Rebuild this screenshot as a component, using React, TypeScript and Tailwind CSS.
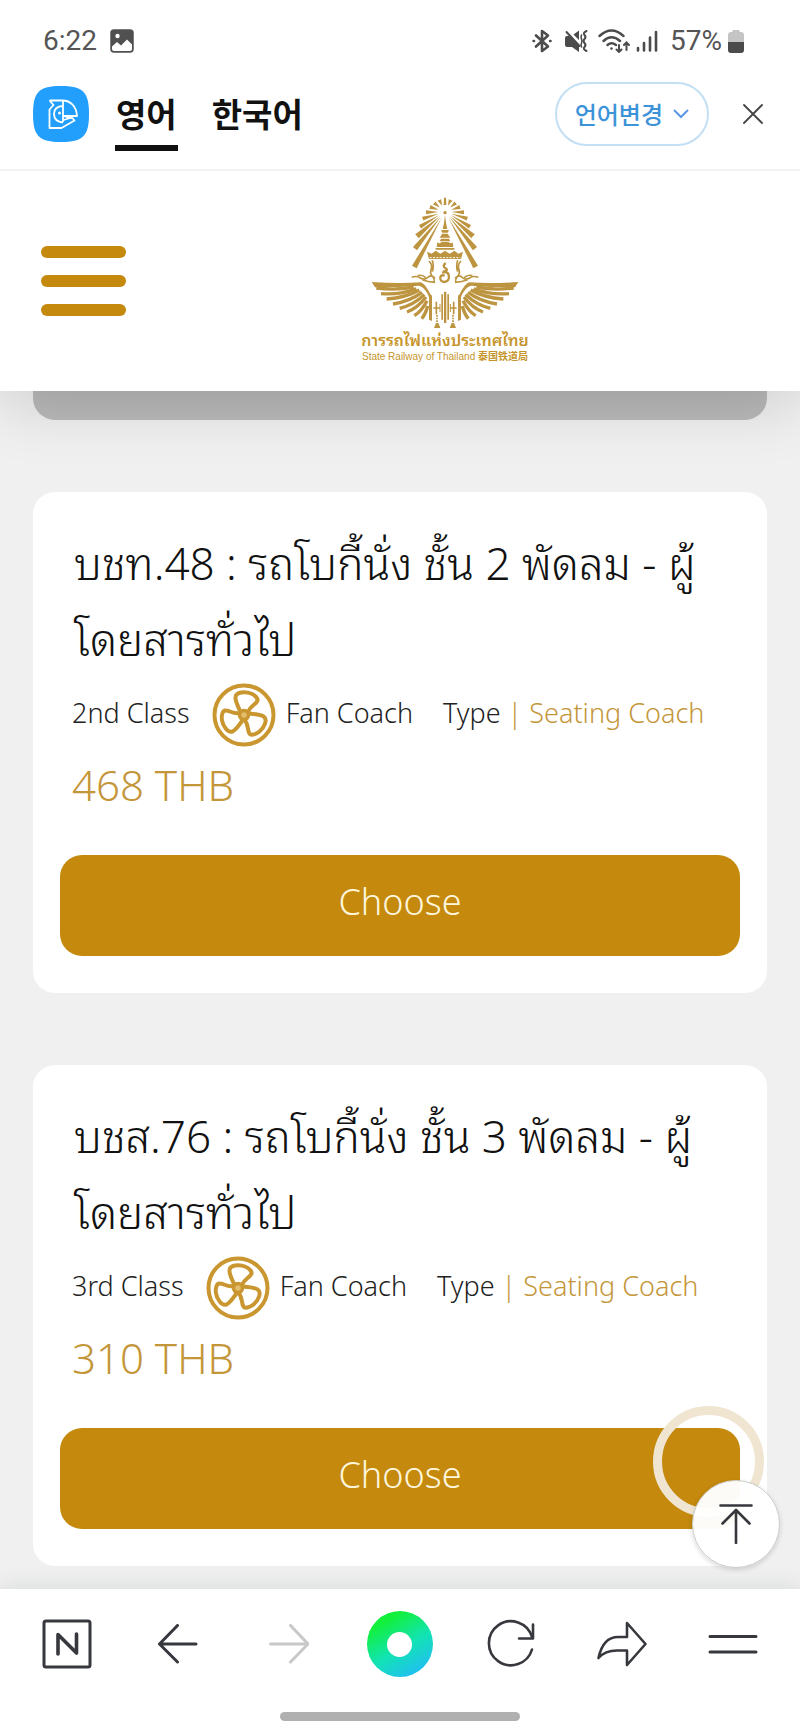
import React from 'react';

interface Fare {
  code: string;
  title: string;
  travelClass: string;
  price: string;
}

const fares: Fare[] = [
  { code: '48', title: 'บชท.48 : รถโบกี้นั่ง ชั้น 2 พัดลม - ผู้โดยสารทั่วไป', travelClass: '2nd Class', price: '468 THB' },
  { code: '76', title: 'บชส.76 : รถโบกี้นั่ง ชั้น 3 พัดลม - ผู้โดยสารทั่วไป', travelClass: '3rd Class', price: '310 THB' },
];

const StatusBar: React.FC = () => (
  <div className="flex h-[82px] items-center justify-between pl-[43px] pr-[56px] font-['Roboto',sans-serif] text-[28px] leading-8 text-[#555]">
    <div className="flex items-center gap-[13px]">
      <span>6:22</span>
      <svg className="h-6 w-6" viewBox="0 0 24 24">
        <rect x="1" y="1" width="22" height="22" rx="3" fill="#505050" stroke="#505050" strokeWidth="1.5" />
        <circle cx="7.5" cy="7" r="2.2" fill="#fff" />
        <path d="M2 17.5 7 13l4 3.5 6-6 5 5V20q0 2-2 2H4q-2 0-2-2z" fill="#fff" />
      </svg>
    </div>
    <div className="flex items-center">
      <svg className="mr-3 h-6 w-5" viewBox="0 0 20 24" fill="none" stroke="#4b4b4b" strokeWidth="2.6" strokeLinecap="round" strokeLinejoin="round">
        <path d="M4 6.5 16 17.5 10 22V2l6 4.5L4 17.5" />
        <path d="M1.5 12h.6M18 12h.6" strokeWidth="2.4" />
      </svg>
      <svg className="mr-2.5 h-6 w-6" viewBox="0 0 24 24">
        <path d="M1 9q0-2 2-2h3l9 9v7l-7-5H3q-2 0-2-2zM9.5 5.5 15 1.5V11z" fill="#4b4b4b" />
        <path d="M2.5 3l13 14" stroke="#4b4b4b" strokeWidth="2" strokeLinecap="round" />
        <path d="M22.5 2q-4 2-2 4t0 4 0 4 0 4 2 4" fill="none" stroke="#4b4b4b" strokeWidth="2" strokeLinecap="round" />
        <path d="M17.5 6q-1 2 0 4t0 4 0 4" fill="none" stroke="#4b4b4b" strokeWidth="1.6" strokeLinecap="round" />
      </svg>
      <svg className="mr-1.5 h-6 w-8" viewBox="0 0 32 24" fill="none" stroke="#4b4b4b" strokeWidth="2.4" strokeLinecap="round">
        <path d="M1.5 7q12-11 24 0M5.5 12q8-7.5 16.5 0M9.5 16q4-3.5 8.5 0" />
        <circle cx="13.5" cy="19.5" r="1.3" fill="#4b4b4b" stroke="none" />
        <path d="M21 16v7m-2.5-2.5L21 23l2.5-2.5M28.5 21v-7.5M26 16l2.5-2.5L31 16" strokeWidth="2" />
      </svg>
      <svg className="mr-3 h-6 w-[22px]" viewBox="0 0 22 24" fill="none" stroke="#4b4b4b" strokeWidth="2.6" strokeLinecap="round">
        <path d="M2 19v2.5M8 14v7.5M14 8.5v13M20 3v18.5" />
      </svg>
      <span className="mr-1.5">57%</span>
      <svg className="h-6 w-4" viewBox="0 0 16 24">
        <path d="M5 1h6l1 2h1q3 0 3 3v8H0V6q0-3 3-3h1z" fill="#c4c4c4" />
        <path d="M0 13h16v8q0 3-3 3H3q-3 0-3-3z" fill="#4b4b4b" />
      </svg>
    </div>
  </div>
);

const PapagoIcon: React.FC = () => (
  <svg className="h-14 w-14 shrink-0" viewBox="0 0 56 56">
    <path d="M28 0C50 0 56 6 56 28S50 56 28 56 0 50 0 28 6 0 28 0z" fill="#229ffd" />
    <g fill="none" stroke="#fff" strokeWidth="1.8" strokeLinejoin="round">
      <path d="M16.5 14.5h13c8 0 14 6 14.5 15.5H30.5M16.5 14.5l4 4.5-4 4.5v18.5h12l13-7.5-2.5-3-8.5 2.5" />
      <path d="M30 14.5v21.5M30 20q-9 .5-9 8t9 8.5M30.5 30l8 2.5" />
    </g>
    <circle cx="26.5" cy="27" r="1.5" fill="#fff" />
  </svg>
);

const TranslateBar: React.FC = () => (
  <div className="relative z-20 flex h-[89px] justify-between border-b-2 border-[#f3f3f3] bg-white px-[33px] font-['Noto_Sans_CJK_KR',sans-serif]">
    <div className="flex items-start gap-[26px] pt-1">
      <PapagoIcon />
      <div className="flex gap-[34px] text-[33px] font-bold leading-[54px] text-[#111]">
        <button className="flex h-[65px] border-b-6 border-[#111] px-px">영어</button>
        <button className="flex h-[65px]">한국어</button>
      </div>
    </div>
    <div className="flex h-16 items-center gap-[30px]">
      <button className="flex h-16 items-center gap-2.5 rounded-full border-2 border-[#c3dff4] px-[18px] text-2xl font-medium text-[#3c93d8]">
        언어변경
        <svg className="h-3 w-4" viewBox="0 0 16 12" fill="none" stroke="#5c97e6" strokeWidth="2">
          <path d="M1 2l7 7 7-7" />
        </svg>
      </button>
      <button aria-label="Close" className="p-1">
        <svg className="h-5 w-5" viewBox="0 0 20 20" fill="none" stroke="#444" strokeWidth="1.8" strokeLinecap="round">
          <path d="M1 1l18 18M19 1 1 19" />
        </svg>
      </button>
    </div>
  </div>
);

// outer end of each ray on the left half, mirrored for the right half
const rays = [
  [222, 258], [224, 203], [230, 166], [239, 137], [247, 113], [257, 94], [269, 78], [282, 66], [297, 57],
];

const RayHalf: React.FC = () => (
  <g>
    {rays.map(([x, y]) => {
      const dx = x - 314;
      const dy = y - 92;
      const len = Math.hypot(dx, dy);
      const w = len > 110 ? 8 : 6;
      const nx = (-dy / len) * w;
      const ny = (dx / len) * w;
      const sx = 314 + (dx / len) * 20;
      const sy = 92 + (dy / len) * 20;
      return <path key={x} d={`M${sx} ${sy}L${x + nx} ${y + ny}L${x - nx} ${y - ny}z`} />;
    })}
  </g>
);

const WingHalf: React.FC = () => (
  <g>
    <path d="M94 303q80 6 148 1 14 6 28 36l5 4v76l-9-4v-68q-12-30-30-34-70 6-132 5z" />
    <g fill="none" stroke="currentColor" strokeWidth="10">
      <path d="M108 321q60 8 112-3" />
      <path d="M122 338q60 4 106-15" />
      <path d="M139 354q58-4 98-27" />
      <path d="M158 369q50-8 87-35" />
      <path d="M178 382q42-10 74-41" />
      <path d="M200 393q32-12 57-45" />
      <path d="M222 404q22-14 38-45" />
      <path d="M244 413q12-14 18-38" />
    </g>
    <path d="M288 362v38M279 381h20" fill="none" stroke="currentColor" strokeWidth="5" />
    <path d="M290 402v26" fill="none" stroke="currentColor" strokeWidth="5" strokeDasharray="5 3" />
    <path d="M287 426h7l6 15h-19z" />
    <path d="M214 289q16-6 26 2 14 8 24-3 10-8 20 4M232 284q14-4 24 6M246 296q16 6 38 8M266 240q12 12 6 26-4 12 6 22 6 8 4 16M276 238q6 20 0 34" fill="none" stroke="currentColor" strokeWidth="5" />
  </g>
);

const RailwayLogo: React.FC = () => (
  <a href="#home" className="flex flex-col items-center text-[#c6952c]">
    <svg className="h-[134px] w-[150px] text-[#bd9440]" viewBox="89 48 450 402" fill="currentColor">
      <RayHalf />
      <path d="M311 50h6l1 22h-8z" />
      <g transform="translate(628 0) scale(-1 1)"><RayHalf /></g>
      <circle cx="314" cy="95" r="5" />
      <path d="M314 102l3 24 4 18h-14l4-18z" />
      <path d="M302 147h24l-4 8h-16zM306 158h16l8 12h-32zM302 173h24l4 8h-32z" />
      <path d="M291 184q8 6 12-1h22q4 7 12 1l2 14h-50zM286 201h56v5h-56z" />
      <path d="M260 212l14 6 12-9 14 9 14-9 14 9 14-9 12 9 14-6-6 22H266z" />
      <path d="M268 230h92" stroke="#fff" strokeWidth="3" strokeDasharray="6 4" />
      <path d="M316 246q-12 10 0 16 10 6-8 10M305 275q16-5 20 6 4 20-13 22-14-2-12-15 4-8 13-4" fill="none" stroke="currentColor" strokeWidth="7" />
      <path d="M311 332h7v94h-7zM303 340h5v76h-5zM321 340h5v76h-5z" />
      <path d="M299 369v24M330 369v24" stroke="currentColor" strokeWidth="3" />
      <WingHalf />
      <g transform="translate(628 0) scale(-1 1)"><WingHalf /></g>
    </svg>
    <span className="whitespace-nowrap font-['Noto_Sans','Noto_Sans_Thai_Looped','Loma','Noto_Sans_Thai',sans-serif] text-base font-semibold leading-[18px]">การรถไฟแห่งประเทศไทย</span>
    <span className="whitespace-nowrap font-['Liberation_Sans','Noto_Sans_CJK_SC',sans-serif] text-[10px] leading-4">State Railway of Thailand <b>泰国铁道局</b></span>
  </a>
);

const SiteHeader: React.FC = () => (
  <header className="relative z-10 flex h-[220px] items-center bg-white pl-[41px] shadow-[0_12px_60px_rgba(0,0,0,0.16)]">
    <button aria-label="Menu" className="flex w-[85px] flex-col gap-[17px]">
      <span className="h-3 rounded-full bg-[#c4890d]" />
      <span className="h-3 rounded-full bg-[#c4890d]" />
      <span className="h-3 rounded-full bg-[#c4890d]" />
    </button>
    <div className="flex flex-1 justify-center pr-9">
      <RailwayLogo />
    </div>
  </header>
);

const FanIcon: React.FC = () => {
  const blade = 'M-4-4C-6-9-9-14-8.5-18-8-23 1-24 7-21.5 11-20 15-16 13-13.5 11-10 6-9 4-3';
  return (
    <svg className="h-16 w-16 shrink-0" viewBox="-32 -32 64 64" fill="none" stroke="#c9962f" strokeWidth="4">
      <circle r="29.5" />
      <path d={blade} />
      <path d={blade} transform="rotate(120)" />
      <path d={blade} transform="rotate(240)" />
      <circle r="4.5" fill="#e2bd6c" strokeWidth="3.5" />
    </svg>
  );
};

const FareCard: React.FC<{ fare: Fare }> = ({ fare }) => (
  <article className="rounded-[22px] bg-white px-[27px] pb-[37px] pt-[33px]">
    <div className="px-3">
      <h2 className="px-0.5 text-[44px] leading-[76px] text-[#111]">{fare.title}</h2>
      <div className="flex h-[76px] items-center whitespace-nowrap text-[27px] text-[#222]">
        <span className="pb-1">{fare.travelClass}</span>
        <span className="ml-[22px] mr-2.5"><FanIcon /></span>
        <span className="pb-1">Fan Coach</span>
        <span className="ml-[30px] pb-1">Type <span className="text-[#c4963a]">| Seating Coach</span></span>
      </div>
      <p className="text-[42px] leading-[64px] text-[#c4963a]">{fare.price}</p>
    </div>
    <button className="mt-[38px] h-[101px] w-full rounded-[22px] bg-[#c4890d] pb-2 text-4xl text-[#fff6dc]">Choose</button>
  </article>
);

const BottomNav: React.FC = () => (
  <nav className="relative z-20 h-36 bg-white shadow-[0_-2px_20px_rgba(60,80,80,0.13)]">
    <div className="flex h-[110px] items-center px-[11px] text-[#36383d]">
      <button aria-label="Naver" className="flex flex-1 justify-center">
        <svg className="h-[50px] w-[50px]" viewBox="0 0 50 50" fill="none" stroke="currentColor" strokeWidth="3" strokeLinejoin="round" strokeLinecap="round">
          <rect x="2" y="2" width="46" height="46" rx="2" />
          <path d="M16 35V15.5L34.5 34V15" strokeWidth="3.6" />
        </svg>
      </button>
      <button aria-label="Back" className="flex flex-1 justify-center">
        <svg className="h-10 w-10" viewBox="0 0 40 40" fill="none" stroke="currentColor" strokeWidth="3" strokeLinecap="round" strokeLinejoin="round">
          <path d="M38 20H1.5M19.5 1.5 1.5 20l18 18" />
        </svg>
      </button>
      <button aria-label="Forward" disabled className="flex flex-1 justify-center text-[#c8c8c8]">
        <svg className="h-10 w-10" viewBox="0 0 40 40" fill="none" stroke="currentColor" strokeWidth="3" strokeLinecap="round" strokeLinejoin="round">
          <path d="M1.5 20H39M21.5 1.5 39 20 21.5 38" />
        </svg>
      </button>
      <button aria-label="Green dot" className="flex flex-1 justify-center">
        <span className="flex h-[66px] w-[66px] items-center justify-center rounded-full bg-linear-[150deg,#12f03c_20%,#12e3b4_55%,#22bdf5_90%]">
          <span className="h-[25px] w-[25px] rounded-full bg-white" />
        </span>
      </button>
      <button aria-label="Reload" className="flex flex-1 justify-center">
        <svg className="h-[50px] w-[50px]" viewBox="0 0 50 50" fill="none" stroke="currentColor" strokeWidth="2.6" strokeLinecap="round" strokeLinejoin="round">
          <path d="M46 30.5A22 22 0 1 1 46 18M47 5.5v14H33" />
        </svg>
      </button>
      <button aria-label="Share" className="flex flex-1 justify-center">
        <svg className="h-[50px] w-[50px]" viewBox="0 0 50 50" fill="none" stroke="currentColor" strokeWidth="2.6" strokeLinecap="round" strokeLinejoin="round">
          <path d="M30 4 48.5 25 30 46V31.5H20Q8 31.5 1.5 39 6 18 21 18h9z" />
        </svg>
      </button>
      <button aria-label="Menu" className="flex flex-1 justify-center">
        <svg className="h-5 w-[50px]" viewBox="0 0 50 20" stroke="currentColor" strokeWidth="3" strokeLinecap="round">
          <path d="M2 2.5h46M2 18h46" />
        </svg>
      </button>
    </div>
    <div className="mx-auto mt-[13px] h-[9px] w-[30%] rounded-full bg-[#b0b0b0]" />
  </nav>
);

const App: React.FC = () => (
  <div className="flex min-h-screen flex-col overflow-hidden bg-white">
    <StatusBar />
    <TranslateBar />
    <SiteHeader />
    <main className="relative flex-1 bg-[#f0f0f0] px-[33px] pb-[23px] font-['Noto_Sans','Noto_Sans_Thai_Looped','Loma','Noto_Sans_Thai',sans-serif] font-light">
      <div className="h-[29px] rounded-b-[22px] bg-[#bababa]" />
      <div className="mt-[72px] flex flex-col gap-[72px]">
        {fares.map(fare => (
          <FareCard key={fare.code} fare={fare} />
        ))}
      </div>
      <div className="absolute bottom-[72px] right-9 h-[111px] w-[111px] rounded-full border-9 border-[#efe5d0]" />
      <button aria-label="Scroll to top" className="absolute bottom-[21px] right-5 flex h-[88px] w-[88px] items-center justify-center rounded-full border border-[#ccc] bg-white/97 shadow-[0_2px_5px_rgba(0,0,0,0.15)]">
        <svg className="h-10 w-[34px]" viewBox="0 0 34 40" fill="none" stroke="#36383d" strokeWidth="2.6" strokeLinecap="round" strokeLinejoin="round">
          <path d="M1.5 1.5h31M17 39V6M3.5 19.5 17 6l13.5 13.5" />
        </svg>
      </button>
    </main>
    <BottomNav />
  </div>
);

export default App;
